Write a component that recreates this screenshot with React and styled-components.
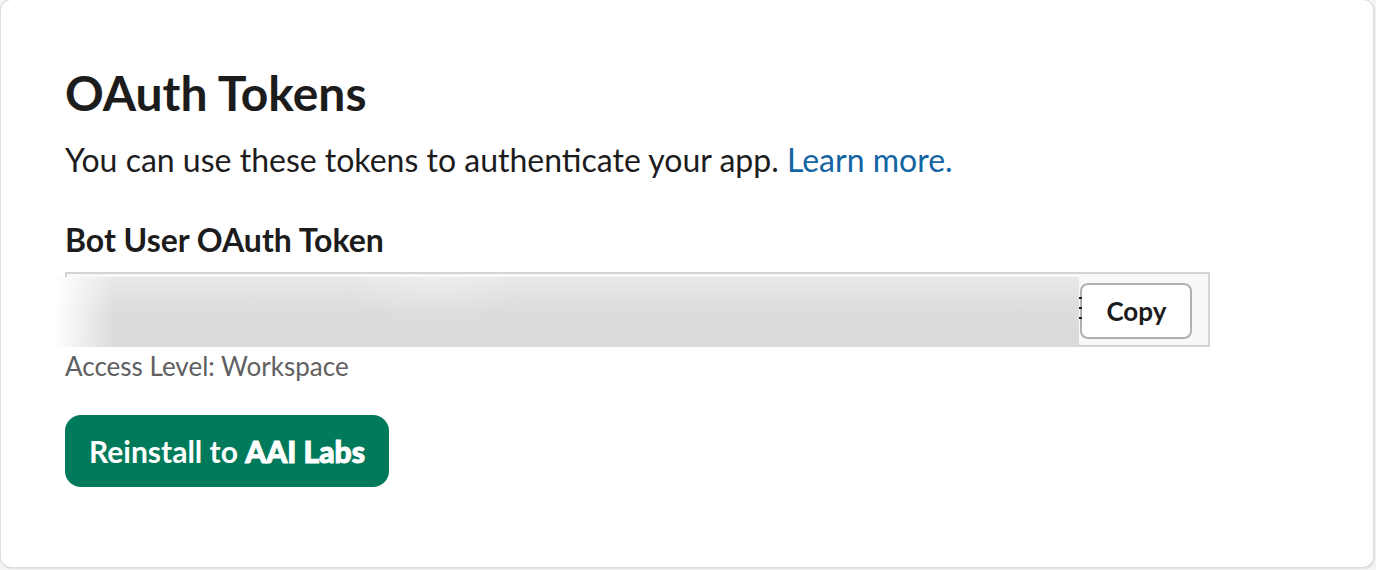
import { useRef } from 'react';
import styled, { createGlobalStyle } from 'styled-components';

const GlobalStyle = createGlobalStyle`
  body {
    margin: 0;
    background-color: #f4f4f4;
    color: #1d1c1d;
    font-family: Lato, 'Liberation Sans', sans-serif;
    font-size: 32px;
    line-height: 44px;
  }
  * {
    box-sizing: border-box;
  }
`;

const Card = styled.section`
  margin: 0 3px 3px 1px;
  padding: 64px 63px 80px 64px;
  background-color: #fff;
  border-radius: 10px;
  box-shadow: 0 0 0 1px #dddddd, 1px 1px 1px 1px #e2e2e2;
`;

const Title = styled.h2`
  margin: 0 0 16px;
  font-size: 48px;
  line-height: 58px;
  font-weight: 700;
`;

const Intro = styled.p`
  margin: 0 0 36px;
`;

const DocsLink = styled.a`
  color: #1264a3;
  text-decoration: none;

  &:hover {
    text-decoration: underline;
  }
`;

const Label = styled.label`
  display: block;
  margin-bottom: 10px;
  font-weight: 700;
`;

const TokenField = styled.div`
  position: relative;
  display: flex;
  align-items: center;
  width: 92%;
  padding: 9px 16px 6px;
  background-color: #f8f8f8;
  border: 2px solid #d4d4d4;
`;

const TokenInput = styled.input`
  flex: 1;
  min-width: 0;
  height: 55px;
  padding: 0;
  border: none;
  outline: none;
  background: transparent;
  color: inherit;
  font: inherit;
`;

const TokenMask = styled.div`
  position: absolute;
  top: 3px;
  right: 129px;
  bottom: -2px;
  left: -12px;
  background:
    linear-gradient(to right, #fff, rgba(255, 255, 255, 0.6) 24px, transparent 60px),
    radial-gradient(ellipse 90px 50px at 37% 0, rgba(255, 255, 255, 0.25), transparent),
    linear-gradient(to bottom, #e8e8e8, #dcdcdc 50%, #dadada);
`;

// Tail of the last character, between the cover and the button
const TokenTail = styled.svg`
  position: absolute;
  top: 22px;
  right: 126px;
`;

const CopyButton = styled.button`
  width: 112px;
  height: 56px;
  padding: 0;
  border: 2px solid #b0b0b0;
  border-radius: 8px;
  background-color: #fff;
  color: inherit;
  font: inherit;
  font-size: 26px;
  font-weight: 700;
  cursor: pointer;
`;

const Hint = styled.p`
  margin: 0 0 30px;
  color: #616061;
  font-size: 26px;
  line-height: 38px;
`;

const InstallButton = styled.button`
  height: 72px;
  padding: 0 24px;
  border: none;
  border-radius: 16px;
  background-color: #007a5a;
  color: #fff;
  font: inherit;
  font-size: 30px;
  font-weight: 700;
  cursor: pointer;

  strong {
    font-weight: 900;
    -webkit-text-stroke: 1px #fff;
  }
`;

function TokenRow() {
  const inputRef = useRef(null);

  function handleCopy() {
    navigator.clipboard?.writeText(inputRef.current.value);
  }

  return (
    <TokenField>
      <TokenInput id="bot-token" ref={inputRef} type="text" readOnly />
      <CopyButton type="button" onClick={handleCopy}>Copy</CopyButton>
      <TokenMask />
      <TokenTail width="3" height="24" aria-hidden="true">
        <path d="M0 2h3M0 12h3M0 22h3" stroke="#1d1c1d" strokeWidth="2" />
      </TokenTail>
    </TokenField>
  );
}

function App() {
  return (
    <>
      <GlobalStyle />
      <Card>
        <Title>OAuth Tokens</Title>
        <Intro>
          You can use these tokens to authenticate your app. <DocsLink href="#learn-more">Learn more.</DocsLink>
        </Intro>
        <Label htmlFor="bot-token">Bot User OAuth Token</Label>
        <TokenRow />
        <Hint>Access Level: Workspace</Hint>
        <InstallButton type="button">
          Reinstall to <strong>AAI Labs</strong>
        </InstallButton>
      </Card>
    </>
  );
}

export default App;
